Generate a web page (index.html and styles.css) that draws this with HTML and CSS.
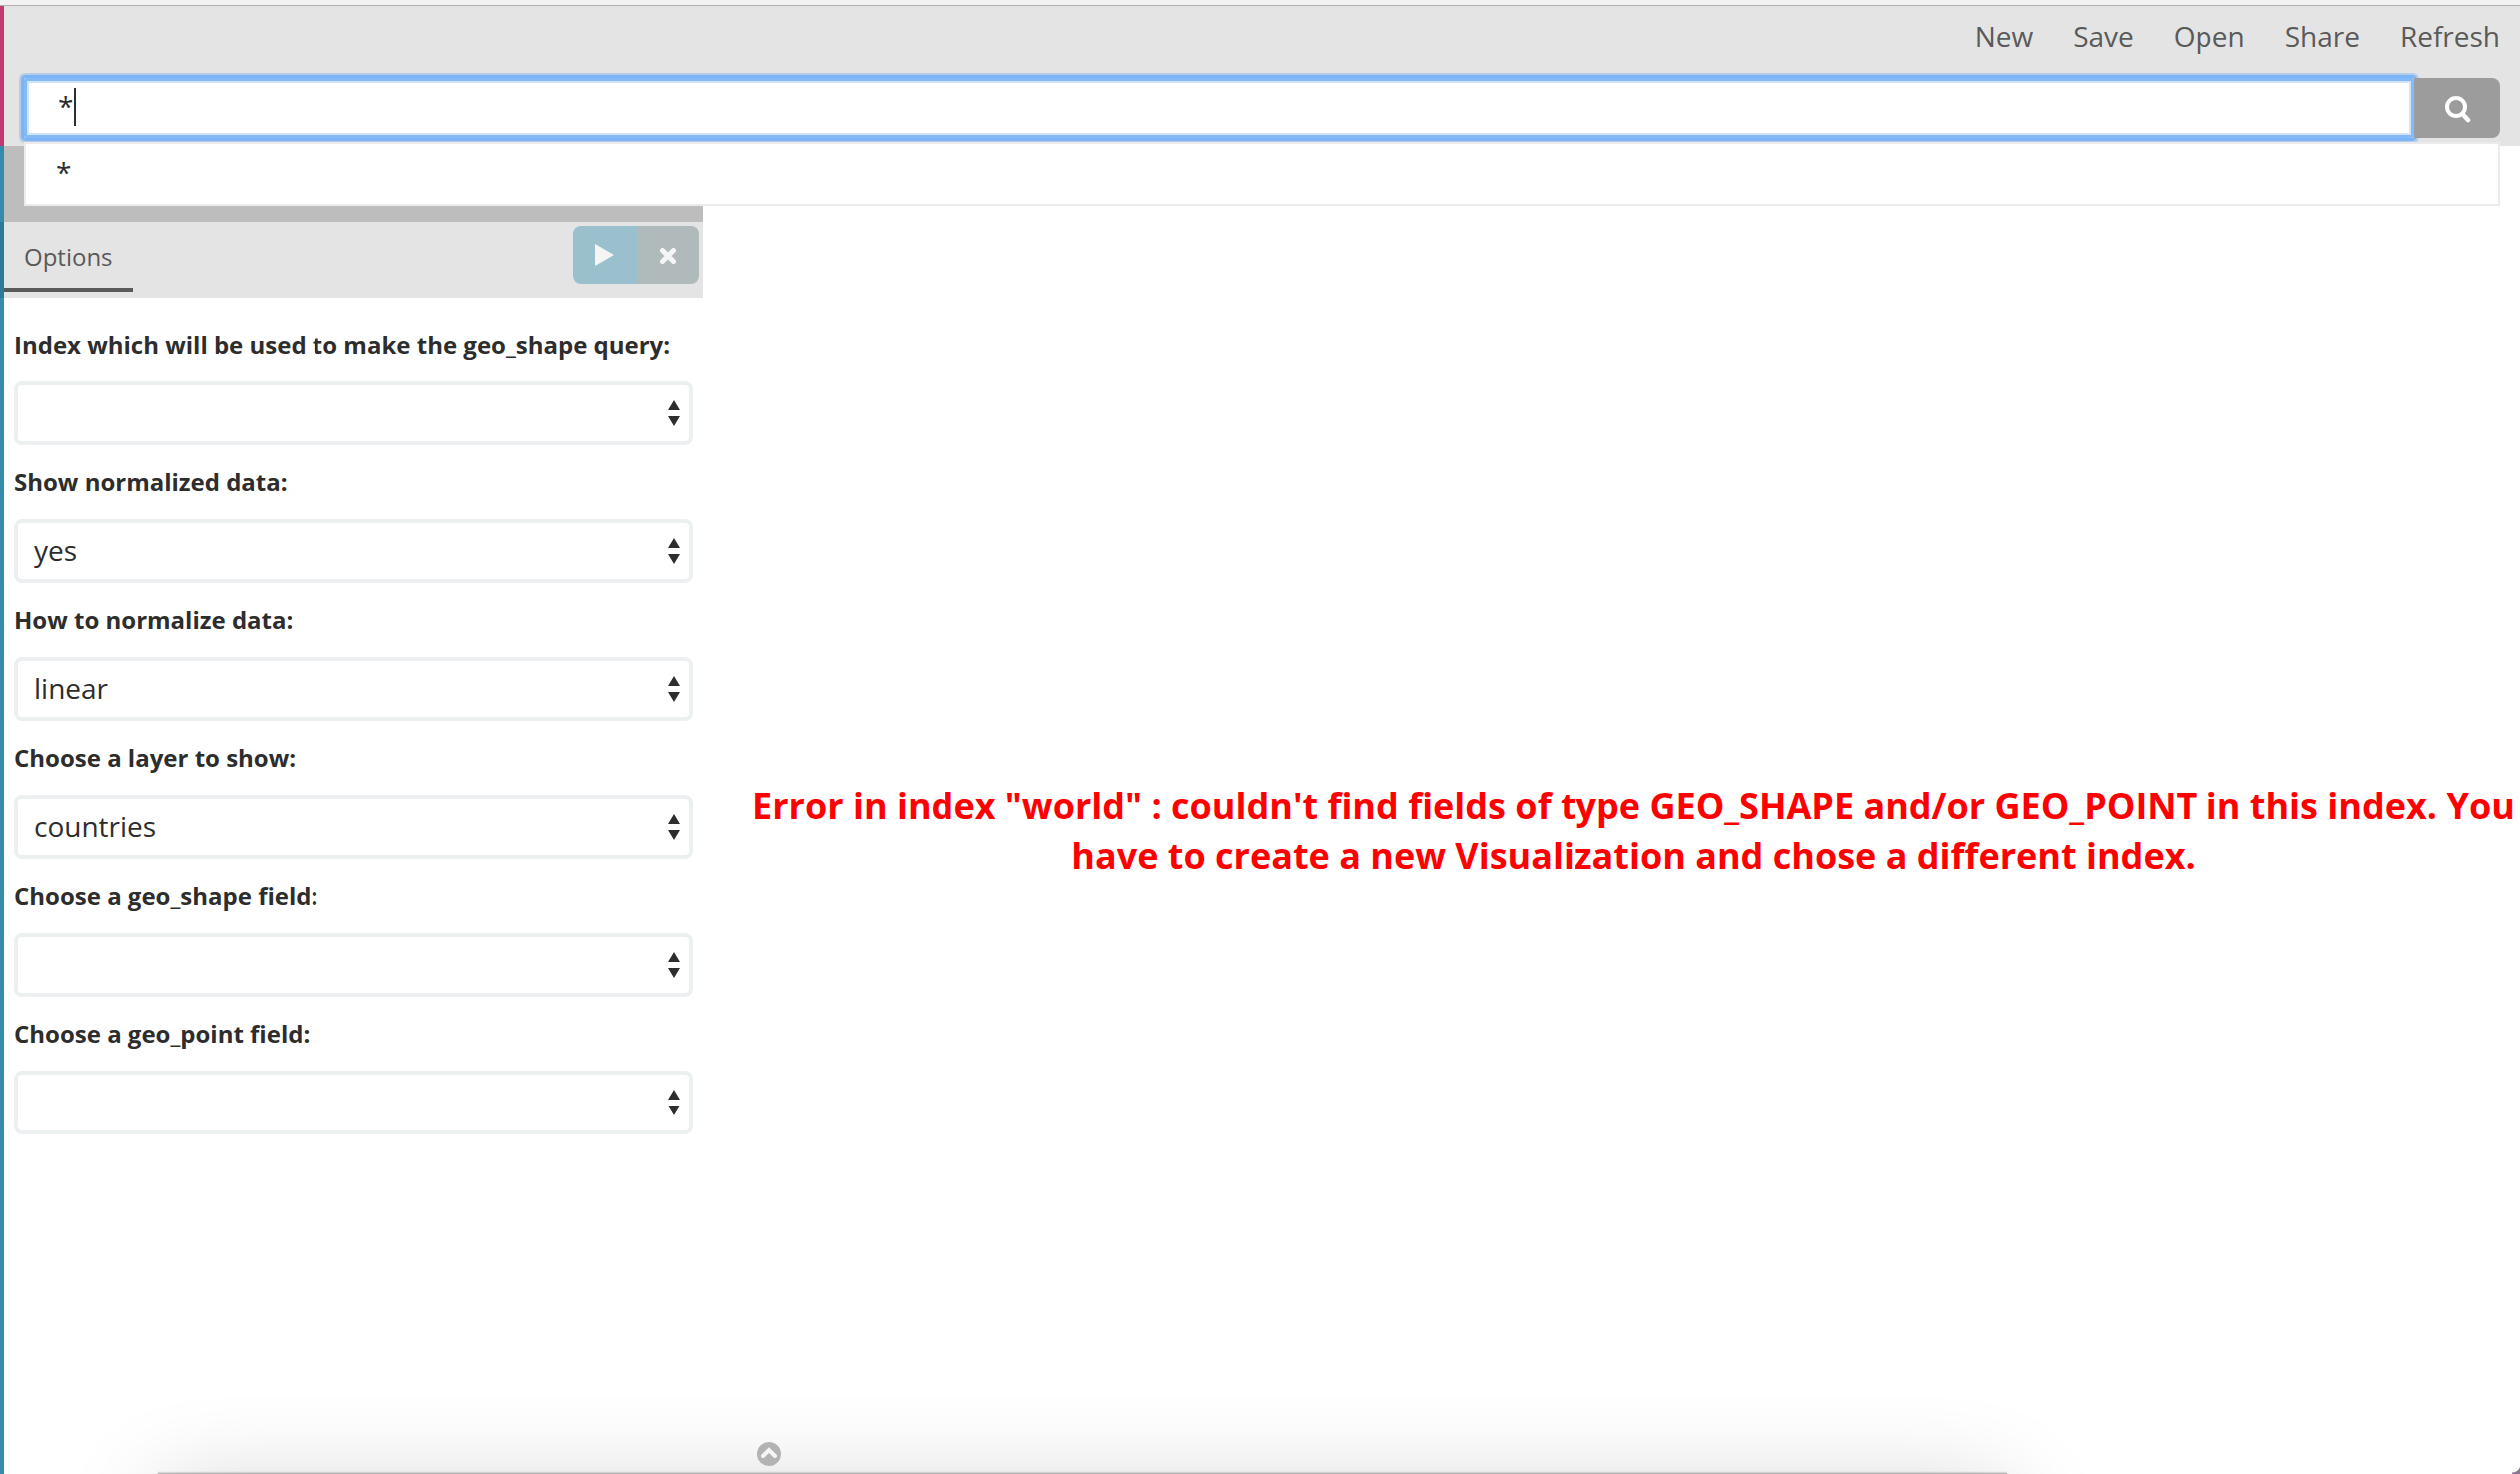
FILE: index.html
```html
<!DOCTYPE html>
<html lang="en">
<head>
<meta charset="utf-8">
<title>Visualize</title>
<link rel="stylesheet" href="styles.css">
</head>
<body>
<div class="chrome-edge"></div>
<header class="navbar">
  <nav class="menu">
    <a href="#new">New</a>
    <a href="#save">Save</a>
    <a href="#open">Open</a>
    <a href="#share">Share</a>
    <a href="#refresh">Refresh</a>
  </nav>
  <form class="search">
    <input class="search-input" type="text" value="*" aria-label="Query" autocomplete="off">
    <button class="search-button" type="button" aria-label="Search">
      <svg width="28" height="30" viewBox="0 0 28 30" fill="none" stroke="#fff"><circle cx="13" cy="14" r="9" stroke-width="4"/><path d="M19.500 21 L25 27" stroke-width="4.500" stroke-linecap="round"/></svg>
    </button>
    <span class="caret"></span>
    <ul class="typeahead"><li>*</li></ul>
  </form>
</header>
<main class="workspace">
  <aside class="sidebar">
    <div class="index-bar"></div>
    <div class="tabs">
      <a class="tab" href="#options">Options</a>
      <div class="actions">
        <button class="apply" type="button" aria-label="Apply changes"><svg width="20" height="22" viewBox="0 0 20 22"><path d="M0 0 L19 11 L0 22Z" fill="#f5f5f5"/></svg></button>
        <button class="discard" type="button" aria-label="Discard changes"><svg width="18" height="20" viewBox="0 0 18 20"><path d="M3.500 5.500 L14.500 16.500 M14.500 5.500 L3.500 16.500" stroke="#f5f5f5" stroke-width="5" stroke-linecap="round"/></svg></button>
      </div>
    </div>
    <form class="options">
      <div class="field"><label for="query-index">Index which will be used to make the geo_shape query:</label>
        <div class="select"><select id="query-index"><option></option></select><svg width="14" height="26" viewBox="0 0 14 26"><path d="M7 0 L13 10 H1Z M1 16 H13 L7 26Z" fill="#2d2d2d"/></svg></div></div>
      <div class="field"><label for="normalized">Show normalized data:</label>
        <div class="select"><select id="normalized"><option>yes</option></select><svg width="14" height="26" viewBox="0 0 14 26"><path d="M7 0 L13 10 H1Z M1 16 H13 L7 26Z" fill="#2d2d2d"/></svg></div></div>
      <div class="field"><label for="method">How to normalize data:</label>
        <div class="select"><select id="method"><option>linear</option></select><svg width="14" height="26" viewBox="0 0 14 26"><path d="M7 0 L13 10 H1Z M1 16 H13 L7 26Z" fill="#2d2d2d"/></svg></div></div>
      <div class="field"><label for="layer">Choose a layer to show:</label>
        <div class="select"><select id="layer"><option>countries</option></select><svg width="14" height="26" viewBox="0 0 14 26"><path d="M7 0 L13 10 H1Z M1 16 H13 L7 26Z" fill="#2d2d2d"/></svg></div></div>
      <div class="field"><label for="shape-field">Choose a geo_shape field:</label>
        <div class="select"><select id="shape-field"><option></option></select><svg width="14" height="26" viewBox="0 0 14 26"><path d="M7 0 L13 10 H1Z M1 16 H13 L7 26Z" fill="#2d2d2d"/></svg></div></div>
      <div class="field"><label for="point-field">Choose a geo_point field:</label>
        <div class="select"><select id="point-field"><option></option></select><svg width="14" height="26" viewBox="0 0 14 26"><path d="M7 0 L13 10 H1Z M1 16 H13 L7 26Z" fill="#2d2d2d"/></svg></div></div>
    </form>
  </aside>
  <section class="canvas">
    <p class="error">Error in index "world" : couldn't find fields of type GEO_SHAPE and/or GEO_POINT in this index. You have to create a new Visualization and chose a different index.</p>
    <button class="spy-toggle" type="button" aria-label="Show details"><svg width="24" height="24" viewBox="0 0 24 24"><circle cx="12" cy="12" r="12" fill="#b3b3b3"/><path d="M6 14 L12 8 L18 14" fill="none" stroke="#f5f5f5" stroke-width="4" stroke-linecap="round"/></svg></button>
  </section>
</main>
<div class="dock"></div>
<div class="corner"></div>
</body>
</html>
```
FILE: styles.css
```css
* { box-sizing: border-box; }

body {
  position: relative;
  display: flex;
  flex-direction: column;
  min-height: 100vh;
  margin: 0;
  background: #fff;
  color: #2d2d2d;
  font: 28px/40px "Open Sans", "Noto Sans", sans-serif;
}

a { color: #5a5a5a; text-decoration: none; }
button { display: flex; align-items: center; justify-content: center; border: 0; padding: 0; }

.chrome-edge { height: 6px; background: #f2f2f2; border-bottom: 1px solid #b0b0b0; }

.navbar {
  padding: 10px 20px 8px;
  border-left: 4px solid #be3a71;
  background: #e4e4e4;
}

.menu { display: flex; justify-content: flex-end; gap: 40px; height: 62px; }

.search { position: relative; display: flex; height: 60px; }

.search-input {
  flex: 1;
  min-width: 0;
  padding: 0 34px 4px;
  border: 0;
  outline: 0;
  border-radius: 2px;
  background: #fff;
  box-shadow: inset 0 0 0 3px #85baf9, inset 0 0 0 5px #cfe4fd, 0 0 0 3px #7db4f5, 0 0 0 5px #b4cee9;
  color: inherit;
  font: inherit;
}

.search-button { width: 86px; background: #9c9c9c; border-radius: 0 8px 8px 0; }

.caret { position: absolute; top: 10px; left: 50px; width: 2px; height: 38px; background: #2d2d2d; }

.typeahead {
  position: absolute;
  z-index: 2;
  top: 64px;
  left: 0;
  right: 0;
  height: 64px;
  margin: 0;
  padding: 8px 30px;
  border: 2px solid #ebebeb;
  background: #fff;
  list-style: none;
}

.workspace { display: flex; flex: 1; }

.sidebar { display: flex; flex-direction: column; flex: none; width: 704px; }

.index-bar { height: 76px; border-left: 4px solid #328caa; background: #bdbdbd; }

.tabs {
  display: flex;
  justify-content: space-between;
  height: 76px;
  padding: 4px 4px 6px 0;
  border-left: 4px solid #2a7a98;
  background: #e4e4e4;
}

.tab {
  height: 66px;
  padding: 10px 20px 0;
  border-bottom: 4px solid #5a5a5a;
  font-size: 24px;
  line-height: 42px;
}

.actions { display: flex; height: 58px; }
.apply { width: 64px; background: #9ac0ce; border-radius: 8px 0 0 8px; }
.discard { width: 62px; background: #b0baba; border-radius: 0 8px 8px 0; }

.options {
  display: flex;
  flex: 1;
  flex-direction: column;
  gap: 18px;
  padding: 28px 10px;
  border-left: 4px solid #328caa;
}

.field { display: flex; flex-direction: column; gap: 18px; }
.field label { font-size: 24px; font-weight: 700; line-height: 38px; }

.select { display: grid; align-items: center; }
.select > * { grid-area: 1 / 1; }
.select svg { justify-self: end; margin-right: 12px; pointer-events: none; }

.select select {
  width: 100%;
  height: 64px;
  padding: 0 16px 2px;
  border: 4px solid #ecf0f1;
  border-radius: 8px;
  background: #fff;
  color: inherit;
  font: inherit;
  appearance: none;
}

.canvas {
  position: relative;
  display: flex;
  flex: 1;
  align-items: center;
  padding: 42px 4px 0 48px;
}

.error {
  flex: 1;
  margin: 0;
  color: #f00;
  font-size: 36px;
  font-weight: 700;
  line-height: 50px;
  text-align: center;
}

.spy-toggle { position: absolute; z-index: 2; left: 54px; bottom: 8px; background: none; border-radius: 50%; }

/* Edge of the window docked below, with its soft shadow */
.dock {
  position: absolute;
  inset: auto 0 0;
  height: 160px;
  overflow: hidden;
  pointer-events: none;
}

.dock::before {
  content: "";
  position: absolute;
  top: 100%;
  left: 158px;
  right: 514px;
  height: 200px;
  margin-top: -1px;
  background: #b8b8b8;
  box-shadow: 0 0 2px rgba(0, 0, 0, .4), 0 20px 100px rgba(0, 0, 0, .2);
}

.corner {
  position: absolute;
  right: 0;
  bottom: 0;
  width: 8px;
  height: 10px;
  background: radial-gradient(circle at 0 0, transparent 8px, #8a7590 9px);
}
```
